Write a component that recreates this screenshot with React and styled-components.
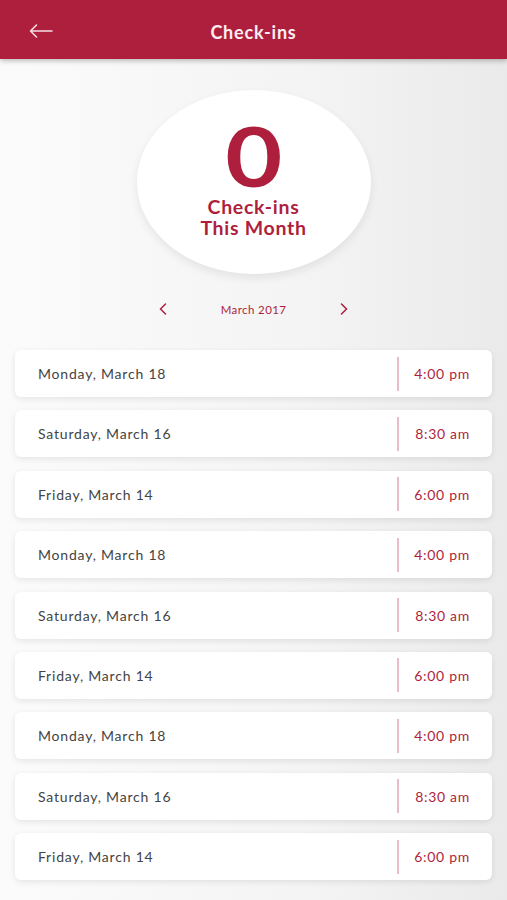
import styled, { createGlobalStyle } from "styled-components";

const GlobalStyle = createGlobalStyle`
  html, body {
    margin: 0;
    padding: 0;
  }
  body {
    font-family: Lato, "Open Sans", sans-serif;
    background: linear-gradient(90deg, #fbfbfb 0%, #f4f4f4 60%, #eaeaea 100%);
    min-height: 900px;
  }
`;

const Page = styled.div`
  width: 507px;
  min-height: 900px;
  display: flex;
  flex-direction: column;
`;

const Header = styled.header`
  height: 59px;
  background: #ad1f3c;
  box-shadow: 0 2px 5px rgba(0, 0, 0, 0.25);
  display: flex;
  align-items: center;
  justify-content: center;
  position: relative;
  z-index: 1;
`;

const BackButton = styled.button`
  position: absolute;
  left: 28px;
  top: 20px;
  width: 26px;
  height: 22px;
  padding: 0;
  border: none;
  background: none;
  display: flex;
  align-items: center;
  justify-content: center;
`;

const HeaderTitle = styled.h1`
  margin: 4px 0 0;
  color: #fbeef1;
  font-size: 18px;
  font-weight: 700;
  letter-spacing: 0.8px;
`;

const Summary = styled.section`
  display: flex;
  flex-direction: column;
  align-items: center;
  padding-top: 31px;
`;

const Circle = styled.div`
  width: 234px;
  height: 184px;
  border-radius: 50%;
  background: #ffffff;
  box-shadow: 0 4px 10px rgba(0, 0, 0, 0.08);
  display: flex;
  flex-direction: column;
  align-items: center;
  justify-content: center;
  color: #ae1f3d;
`;

const Count = styled.div`
  font-size: 82px;
  font-weight: 700;
  line-height: 64px;
  margin-top: -4px;
  transform: scaleX(1.2);
`;

const CountLabel = styled.div`
  font-size: 19.5px;
  font-weight: 700;
  line-height: 21px;
  letter-spacing: 0.7px;
  text-align: center;
  margin-top: 9px;
`;

const MonthNav = styled.div`
  display: flex;
  align-items: center;
  justify-content: space-between;
  width: 190px;
  margin-top: 27px;
  color: #ae1f3d;
`;

const Chevron = styled.button`
  width: 8px;
  height: 16px;
  padding: 0;
  border: none;
  background: none;
  display: flex;
  align-items: center;
  justify-content: center;
`;

const MonthLabel = styled.span`
  font-size: 11.5px;
  letter-spacing: 0.4px;
  color: #ae1f3d;
`;

const List = styled.ul`
  list-style: none;
  margin: 33px 0 0;
  padding: 0 15px;
  display: flex;
  flex-direction: column;
  gap: 13.4px;
`;

const Card = styled.li`
  height: 47px;
  background: #ffffff;
  border-radius: 6px;
  box-shadow: 0 2px 6px rgba(0, 0, 0, 0.09);
  display: flex;
  align-items: center;
  padding: 0 22px 0 23px;
`;

const DateText = styled.span`
  flex: 1;
  font-size: 14px;
  color: #444444;
  letter-spacing: 0.8px;
`;

const Divider = styled.span`
  width: 2px;
  height: 34px;
  background: #e9bcc6;
`;

const TimeText = styled.span`
  width: 56px;
  margin-left: 15px;
  text-align: right;
  font-size: 14px;
  color: #ae1f3d;
  letter-spacing: 0.7px;
`;

const checkins = [
  ["Monday, March 18", "4:00 pm"],
  ["Saturday, March 16", "8:30 am"],
  ["Friday, March 14", "6:00 pm"],
  ["Monday, March 18", "4:00 pm"],
  ["Saturday, March 16", "8:30 am"],
  ["Friday, March 14", "6:00 pm"],
  ["Monday, March 18", "4:00 pm"],
  ["Saturday, March 16", "8:30 am"],
  ["Friday, March 14", "6:00 pm"],
];

const App = () => {
  return (
    <Page>
      <GlobalStyle />
      <Header>
        <BackButton aria-label="Back">
          <svg width="24" height="14" viewBox="0 0 24 14" fill="none" stroke="#f6dfe4" strokeWidth="1.6" strokeLinecap="round" strokeLinejoin="round">
            <path d="M23 7H1.5M7.5 1L1.5 7l6 6" />
          </svg>
        </BackButton>
        <HeaderTitle>Check-ins</HeaderTitle>
      </Header>
      <Summary>
        <Circle>
          <Count>0</Count>
          <CountLabel>
            Check-ins
            <br />
            This Month
          </CountLabel>
        </Circle>
        <MonthNav>
          <Chevron aria-label="Previous month">
            <svg width="8" height="12" viewBox="0 0 8 12" fill="none" stroke="#ae1f3d" strokeWidth="1.5" strokeLinecap="round">
              <path d="M6.5 1L1.5 6l5 5" />
            </svg>
          </Chevron>
          <MonthLabel>March 2017</MonthLabel>
          <Chevron aria-label="Next month">
            <svg width="8" height="12" viewBox="0 0 8 12" fill="none" stroke="#ae1f3d" strokeWidth="1.5" strokeLinecap="round">
              <path d="M1.5 1l5 5-5 5" />
            </svg>
          </Chevron>
        </MonthNav>
      </Summary>
      <List>
        {checkins.map(([day, time], i) => (
          <Card key={i}>
            <DateText>{day}</DateText>
            <Divider />
            <TimeText>{time}</TimeText>
          </Card>
        ))}
      </List>
    </Page>
  );
};

export default App;
